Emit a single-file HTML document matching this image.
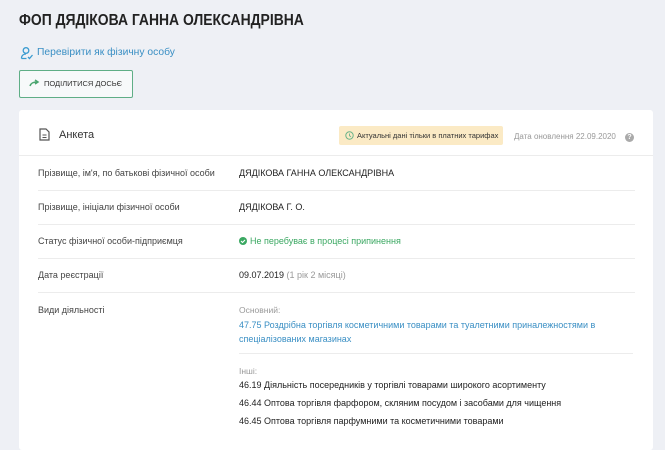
<!DOCTYPE html>
<html><head><meta charset="utf-8"><style>
body{margin:0;background:#eef0f5;font-family:"Liberation Sans",sans-serif;width:665px;height:431px;overflow:hidden;position:relative;color:#333}
.a{position:absolute;white-space:nowrap}
.card{position:absolute;left:19px;top:110px;width:634px;height:340px;background:#fff;border-radius:3px}
.hr{position:absolute;height:1px;background:#ececec}
.l{font-size:9px;color:#444}
.v{font-size:9px;color:#222}
</style></head><body>
<div class="a" style="left:19px;top:12px;font-size:16px;color:#222;font-weight:bold;transform:scaleX(0.87);transform-origin:0 0">ФОП ДЯДІКОВА ГАННА ОЛЕКСАНДРІВНА</div>
<svg class="a" style="left:20px;top:46px" width="14" height="14" viewBox="0 0 14 14"><circle cx="6" cy="4.5" r="2.8" fill="none" stroke="#3a9bd0" stroke-width="1.3"/><path d="M1.5 12.5c0-3 2-4.5 4.5-4.5" fill="none" stroke="#3a9bd0" stroke-width="1.3"/><path d="M1.5 12.5h5M8 11l1.5 1.5L12.5 9" fill="none" stroke="#3a9bd0" stroke-width="1.3"/></svg>
<div class="a" style="left:37px;top:47px;font-size:10.3px;color:#3a8fc4">Перевірити як фізичну особу</div>
<div class="a" style="left:19px;top:70px;width:112px;height:26px;border:1px solid #5fae86;border-radius:2px;background:#f7f9fa"></div>
<svg class="a" style="left:29px;top:79px" width="11" height="8" viewBox="0 0 11 8"><path d="M1 7c1-3 3-4 7-4M6 1l3 2-3 2" fill="none" stroke="#4aa56f" stroke-width="1.5"/></svg>
<div class="a" style="left:44px;top:79px;font-size:7.5px;color:#333">ПОДІЛИТИСЯ ДОСЬЄ</div>
<div class="card"></div>
<svg class="a" style="left:39px;top:128px" width="11" height="13" viewBox="0 0 11 13"><path d="M1 1h6l3 3v8H1z" fill="none" stroke="#555" stroke-width="1.2"/><path d="M3.5 7h4M3.5 9.5h4" stroke="#555"/></svg>
<div class="a" style="left:59px;top:129px;font-size:11px;color:#333">Анкета</div>
<div class="a" style="left:339px;top:126px;width:164px;height:19px;background:#fbeac5;border-radius:2px"></div>
<svg class="a" style="left:345px;top:131px" width="9" height="9"><circle cx="4.5" cy="4.5" r="3.7" fill="none" stroke="#6ab48a" stroke-width="1"/><path d="M4.5 2.5v2.2l1.5 1" fill="none" stroke="#6ab48a" stroke-width=".9"/></svg>
<div class="a" style="left:357px;top:131px;font-size:7.5px;color:#333">Актуальні дані тільки в платних тарифах</div>
<div class="a" style="left:514px;top:132px;font-size:8px;color:#999">Дата оновлення 22.09.2020</div>
<div class="a" style="left:625px;top:133px;width:9px;height:9px;border-radius:50%;background:#aaa;color:#fff;font-size:7px;text-align:center;line-height:9px;font-weight:bold">?</div>
<div class="hr" style="left:19px;top:155px;width:634px"></div>
<div class="a l" style="left:38px;top:168px">Прізвище, ім'я, по батькові фізичної особи</div>
<div class="a v" style="left:239px;top:168px">ДЯДІКОВА ГАННА ОЛЕКСАНДРІВНА</div>
<div class="hr" style="left:38px;top:190px;width:597px"></div>
<div class="a l" style="left:38px;top:202px">Прізвище, ініціали фізичної особи</div>
<div class="a v" style="left:239px;top:202px">ДЯДІКОВА Г. О.</div>
<div class="hr" style="left:38px;top:224px;width:597px"></div>
<div class="a l" style="left:38px;top:236px">Статус фізичної особи-підприємця</div>
<svg class="a" style="left:239px;top:237px" width="8" height="8"><circle cx="4" cy="4" r="4" fill="#3ba862"/><path d="M2 4l1.5 1.5L6 3" fill="none" stroke="#fff" stroke-width="1.1"/></svg>
<div class="a" style="left:250px;top:236px;font-size:9px;color:#3ba862">Не перебуває в процесі припинення</div>
<div class="hr" style="left:38px;top:258px;width:597px"></div>
<div class="a l" style="left:38px;top:270px">Дата реєстрації</div>
<div class="a v" style="left:239px;top:270px">09.07.2019 <span style="color:#999">(1 рік 2 місяці)</span></div>
<div class="hr" style="left:38px;top:292px;width:597px"></div>
<div class="a l" style="left:38px;top:305px">Види діяльності</div>
<div class="a" style="left:239px;top:305px;font-size:8.5px;color:#999">Основний:</div>
<div class="a" style="left:239px;top:319px;font-size:9px;color:#3a8fc4;line-height:13.5px">47.75 Роздрібна торгівля косметичними товарами та туалетними приналежностями в<br>спеціалізованих магазинах</div>
<div class="hr" style="left:239px;top:353px;width:394px"></div>
<div class="a" style="left:239px;top:366px;font-size:8.5px;color:#999">Інші:</div>
<div class="a v" style="left:239px;top:380px">46.19 Діяльність посередників у торгівлі товарами широкого асортименту</div>
<div class="a v" style="left:239px;top:398px">46.44 Оптова торгівля фарфором, скляним посудом і засобами для чищення</div>
<div class="a v" style="left:239px;top:416px">46.45 Оптова торгівля парфумними та косметичними товарами</div>
</body></html>
